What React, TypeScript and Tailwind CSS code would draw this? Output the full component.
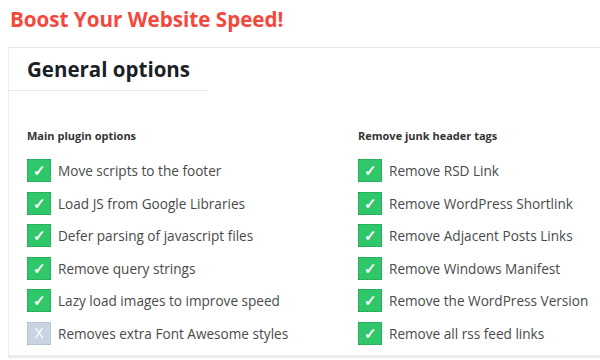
import React from 'react';

type Option = { label: string; checked: boolean };

const mainOptions: Option[] = [
  { label: 'Move scripts to the footer', checked: true },
  { label: 'Load JS from Google Libraries', checked: true },
  { label: 'Defer parsing of javascript files', checked: true },
  { label: 'Remove query strings', checked: true },
  { label: 'Lazy load images to improve speed', checked: true },
  { label: 'Removes extra Font Awesome styles', checked: false },
];

const junkOptions: Option[] = [
  { label: 'Remove RSD Link', checked: true },
  { label: 'Remove WordPress Shortlink', checked: true },
  { label: 'Remove Adjacent Posts Links', checked: true },
  { label: 'Remove Windows Manifest', checked: true },
  { label: 'Remove the WordPress Version', checked: true },
  { label: 'Remove all rss feed links', checked: true },
];

function Toggle({ checked }: { checked: boolean }) {
  return checked ? (
    <span className="flex h-[23px] w-[24px] shrink-0 items-center justify-center border border-dotted border-[#1f9a4e] bg-[#2fc76a] text-[15px] font-bold leading-none text-white">
      ✓
    </span>
  ) : (
    <span className="flex h-[23px] w-[24px] shrink-0 items-center justify-center border border-dotted border-[#aab6c6] bg-[#c9d4e2] text-[14px] leading-none text-white">
      X
    </span>
  );
}

function Column({ title, options }: { title: string; options: Option[] }) {
  return (
    <div className="w-[331px] shrink-0">
      <h3 className="text-[11px] font-bold leading-[14px] text-[#333]">{title}</h3>
      <ul className="mt-[16px] flex flex-col gap-[9.6px]">
        {options.map((o) => (
          <li key={o.label} className="flex items-center gap-[7px]">
            <Toggle checked={o.checked} />
            <span className="text-[13.6px] leading-[23px] text-[#4a4a4a]">{o.label}</span>
          </li>
        ))}
      </ul>
    </div>
  );
}

export default function App() {
  return (
    <div className="h-[360px] w-[600px] overflow-hidden bg-white font-['Open_Sans',sans-serif]">
      <h1 className="pl-[10px] pt-[6px] text-[20.6px] font-bold leading-[27px] text-[#f4473d]">
        Boost Your Website Speed!
      </h1>
      <div className="ml-[8px] mt-[14px] h-[311px] border-b-[3px] border-l border-t border-[#ececec] border-t-[#e6e6e6]">
        <div className="w-[199px] border-b border-[#e8e8e8] pb-[9px] pl-[18px] pt-[9px]">
          <h2 className="text-[20.5px] font-bold leading-[24px] text-[#1c1f26]">General options</h2>
        </div>
        <div className="flex pl-[18px] pt-[38px]">
          <Column title="Main plugin options" options={mainOptions} />
          <Column title="Remove junk header tags" options={junkOptions} />
        </div>
      </div>
    </div>
  );
}
